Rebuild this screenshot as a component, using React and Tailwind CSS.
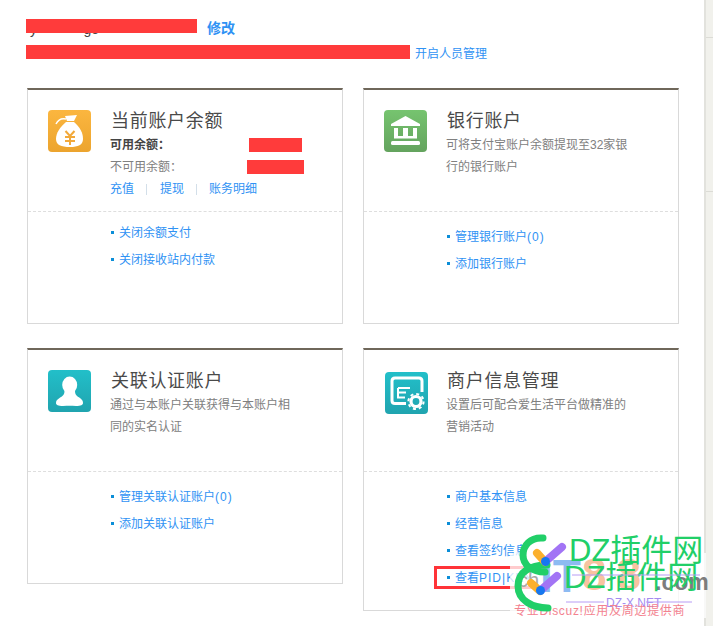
const FONT = "font-['Liberation_Sans','Noto_Sans_CJK_SC',sans-serif]";

function BagIcon() {
  return (
    <div className="w-[43px] h-[42px] shrink-0 rounded-[4px] bg-linear-to-b from-[#fbb63f] to-[#eca42e]">
      <svg width="43" height="42" viewBox="0 0 43 42">
        <path d="M17 6 L29 5 L26 11 L19 11 Z" fill="#fff" />
        <path d="M18 9 C14 8 10 10 8 14" stroke="#fff" strokeWidth="1.5" fill="none" />
        <path d="M18 12 L26 12 C32 17 35 23 35 29 C35 35 30 37 22 37 C13 37 8 35 8 29 C8 23 12 17 18 12 Z" fill="#fff" />
        <path d="M17.5 21 L22 26 L26.5 21 M17 27 H27 M17 31 H27 M22 26 V35" stroke="#f2a93a" strokeWidth="2" fill="none" />
      </svg>
    </div>
  );
}

function BankIcon() {
  return (
    <div className="w-[43px] h-[42px] shrink-0 rounded-[4px] bg-linear-to-b from-[#76c46f] to-[#64a35e]">
      <svg width="43" height="42" viewBox="0 0 43 42">
        <path d="M21.5 6 L36 14 V16 H7 V14 Z" fill="#fff" />
        <path d="M10 18 H14 V26 H19 V18 H24 V26 H29 V18 H33 V28.5 H10 Z" fill="#fff" />
        <rect x="7" y="31" width="29" height="4" rx="1.5" fill="#fff" />
      </svg>
    </div>
  );
}

function PersonIcon() {
  return (
    <div className="w-[43px] h-[42px] shrink-0 rounded-[4px] bg-linear-to-b from-[#22bfc9] to-[#20a4af]">
      <svg width="43" height="42" viewBox="0 0 43 42">
        <ellipse cx="21.7" cy="15" rx="7.5" ry="8.5" fill="#fff" />
        <path d="M16.5 21 H27 C27 25 29 26 32 28 C34 29.5 35 31 35 33 C35 35 33 36 28 36 C23 35.6 20 35.6 15 36 C10 36 8 35 8 33 C8 31 9 29.5 11.5 28 C14.5 26 16.5 25 16.5 21 Z" fill="#fff" />
      </svg>
    </div>
  );
}

function GearIcon() {
  return (
    <div className="w-[43px] h-[42px] shrink-0 rounded-[4px] bg-linear-to-b from-[#22bfc9] to-[#20a4af]">
      <svg width="43" height="42" viewBox="0 0 43 42">
        <path d="M21 31.5 H10 C8 31.5 7 30.5 7 28.5 V9 C7 7 8 6 10 6 H34 C36 6 37 7 37 9 V20" stroke="#fff" strokeWidth="3" fill="none" />
        <path d="M13 16 H25 M13 16 V25.5 H20 M13 20.5 H21" stroke="#fff" strokeWidth="2" fill="none" />
        <circle cx="31" cy="29.5" r="5" stroke="#fff" strokeWidth="3.2" fill="none" />
        <circle cx="31" cy="29.5" r="7.6" stroke="#fff" strokeWidth="2" strokeDasharray="3 2.97" fill="none" />
      </svg>
    </div>
  );
}

function LinkItem({ children, boxed }) {
  return (
    <li className="relative flex items-center h-[27px]">
      <span className="w-[3px] h-[3px] bg-[#0b8ed8] mr-[5px] shrink-0" />
      <a className="text-[12px] text-[#2f92f4] whitespace-nowrap">{children}</a>
      {boxed && <span className="absolute left-[-13px] top-[2px] w-[114px] h-[23px] border-[3px] border-[#ff3338]" />}
    </li>
  );
}

function Card({ icon, title, children, links, linksPad, height, iconPad, boxedLast }) {
  return (
    <section className={`border border-[#d9d9d9] border-t-2 border-t-[#6f675a] bg-white ${height}`}>
      <div className="flex h-[121px] pl-5 border-b border-dashed border-[#dedede] box-content">
        <div className={iconPad}>{icon}</div>
        <div className="ml-[19px] pt-[19px] w-[200px]">
          <h2 className="pl-px text-[18px] leading-[24px] tracking-[0.7px] font-normal text-[#4a4a4a]">{title}</h2>
          <div className="text-[12px] leading-[22px] text-[#808080] mt-[1px]">{children}</div>
        </div>
      </div>
      <ul className={`pl-[83px] ${linksPad}`}>
        {links.map((l, i) => (
          <LinkItem key={i} boxed={boxedLast && i === links.length - 1}>{l}</LinkItem>
        ))}
      </ul>
    </section>
  );
}

const Latin = ({ children }) => <span className="tracking-[1px]">{children}</span>;

function Watermark() {
  return (
    <div className="absolute left-[510px] top-[520px] w-[203px] h-[106px] pointer-events-none overflow-hidden">
      <div className="absolute left-0 top-[33px] w-[196px] h-[65px] bg-white/75" />
      <span className="absolute left-[30px] top-[28px] text-[46px] leading-[56px] font-bold text-[#8dbbf2]">IT</span>
      <span className="absolute left-[72px] top-[32px] text-[44px] leading-[46px] font-bold text-[#f8c3a0] tracking-[10px]">88</span>
      <span className="absolute left-[8px] top-[48px] text-[20px] leading-[24px] text-[#a8a8a8]">ch</span>
      <span className="absolute left-[145px] top-[48px] text-[23px] leading-[28px] font-bold text-[#7d7d7d]">.com</span>
      <span className="absolute left-[59px] top-[13px] text-[31px] leading-[36px] text-[#21cf68] whitespace-nowrap">DZ插件网</span>
      <span className="absolute left-[54px] top-[40px] text-[31px] leading-[36px] text-[#21cf68] whitespace-nowrap">DZ插件网</span>
      <span className="absolute left-[96px] top-[76px] text-[12px] leading-[14px] text-[#a58cf0] whitespace-nowrap">DZ-X.NET</span>
      <span className="absolute left-[4px] top-[84px] text-[12px] leading-[15px] tracking-[0.7px] text-[#f3828f] whitespace-nowrap">专业Discuz!应用及周边提供商</span>
      <svg className="absolute left-0 top-0" width="203" height="106" viewBox="510 520 203 106">
        <path d="M572 575 H700 M566 602 H604 M646 602 H692" stroke="#b79cf5" strokeWidth="1" fill="none" />
        <path d="M543 538 C530 537 523 546 523 555 C523 565 532 572 545 572" stroke="#21cf68" strokeWidth="7" strokeLinecap="round" fill="none" />
        <path d="M547 565 C530 565 518 572 518 586 C518 600 532 608 548 608" stroke="#21cf68" strokeWidth="7" strokeLinecap="round" fill="none" />
        <path d="M537 553 L545 562" stroke="#fbb02e" strokeWidth="8" strokeLinecap="round" />
        <path d="M546 561 L562 547" stroke="#a274f5" strokeWidth="8" strokeLinecap="round" />
        <circle cx="545.5" cy="561.5" r="4.5" fill="#1677f0" />
        <path d="M531 583 L540 591" stroke="#fbb02e" strokeWidth="8" strokeLinecap="round" />
        <path d="M541 590 L557 576" stroke="#a274f5" strokeWidth="8" strokeLinecap="round" />
        <circle cx="540.5" cy="590.5" r="4.5" fill="#1677f0" />
      </svg>
    </div>
  );
}

export default function App() {
  return (
    <div className={`relative flex h-[626px] w-[713px] overflow-hidden bg-white ${FONT}`}>
      <main className="w-[704px] shrink-0 pl-[26px] pt-[19px]">
        <div className="relative flex items-center h-[14px]">
          <span className="absolute left-0 top-px text-[14px] leading-[18px] text-[#444] whitespace-pre">{" y            ge"}</span>
          <span className="relative w-[171px] h-[14px] bg-[#ff3b3b]" />
          <a className="relative ml-[10px] mt-1 text-[14px] font-bold text-[#2f92f4] leading-[18px]">修改</a>
        </div>
        <div className="flex items-center h-[14px] mt-[12px]">
          <span className="w-[384px] h-[14px] bg-[#ff3b3b]" />
          <a className="ml-[5px] mt-1 text-[12px] text-[#2f92f4] leading-[18px] whitespace-nowrap">开启人员管理</a>
        </div>
        <div className="grid grid-cols-[316px_316px] gap-x-5 gap-y-6 items-start ml-px mt-[29px]">
          <Card
            icon={<BagIcon />}
            iconPad="pt-5"
            title="当前账户余额"
            height="h-[236px]"
            linksPad="pt-[7px]"
            links={["关闭余额支付", "关闭接收站内付款"]}
          >
            <div className="flex items-center font-bold text-[#444]">
              <span className="w-[139px]">可用余额：</span>
              <span className="w-[53px] h-[14px] bg-[#ff3b3b]" />
            </div>
            <div className="flex items-center">
              <span className="w-[137px]">不可用余额：</span>
              <span className="w-[57px] h-[14px] bg-[#ff3b3b]" />
            </div>
            <div className="flex items-center text-[#2f92f4]">
              <a>充值</a>
              <span className="w-px h-[11px] bg-[#d3dfe9] ml-3 mr-[13px]" />
              <a>提现</a>
              <span className="w-px h-[11px] bg-[#d3dfe9] ml-3 mr-3" />
              <a>账务明细</a>
            </div>
          </Card>
          <Card
            icon={<BankIcon />}
            iconPad="pt-5"
            title="银行账户"
            height="h-[236px]"
            linksPad="pt-[11px]"
            links={[<>管理银行账户<Latin>(0)</Latin></>, "添加银行账户"]}
          >
            <p className="w-[190px]">可将支付宝账户余额提现至32家银行的银行账户</p>
          </Card>
          <Card
            icon={<PersonIcon />}
            iconPad="pt-5"
            title="关联认证账户"
            height="h-[236px]"
            linksPad="pt-[11px]"
            links={[<>管理关联认证账户<Latin>(0)</Latin></>, "添加关联认证账户"]}
          >
            <p className="w-[190px]">通过与本账户关联获得与本账户相同的实名认证</p>
          </Card>
          <Card
            icon={<GearIcon />}
            iconPad="pt-[22px] pl-px -mr-px"
            title="商户信息管理"
            height="h-[263px]"
            linksPad="pt-[11px]"
            boxedLast
            links={["商户基本信息", "经营信息", "查看签约信息", <>查看<Latin>PID|KEY</Latin></>]}
          >
            <p className="w-[190px]">设置后可配合爱生活平台做精准的营销活动</p>
          </Card>
        </div>
      </main>
      <aside className="flex-1 flex flex-col bg-[#f1f1ec] border-l-2 border-[#e2e2dd]">
        <div className="h-[38px] border-b border-[#dcdcd6]" />
        <div className="h-[154px] border-b border-[#dcdcd6]" />
      </aside>
      <Watermark />
    </div>
  );
}
